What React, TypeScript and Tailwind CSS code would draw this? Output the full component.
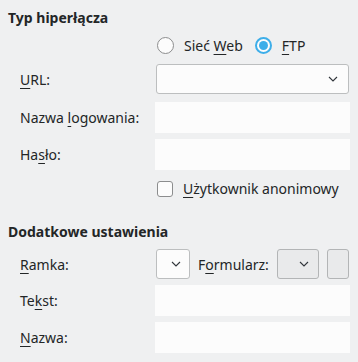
import React from 'react'

const Chevron = () => (
  <svg width="10" height="6" viewBox="0 0 10 6" className="text-[#31363b]">
    <path d="M1 1 L5 5 L9 1" fill="none" stroke="currentColor" strokeWidth="1.1" />
  </svg>
)

const Field = () => <div className="h-[31px] w-[195px] bg-[#fcfcfc]" />

function Row({ label, children }: { label: React.ReactNode; children: React.ReactNode }) {
  return (
    <div className="flex items-center">
      <div className="w-[155px] shrink-0 whitespace-nowrap pl-[20px]">{label}</div>
      {children}
    </div>
  )
}

const U = ({ children }: { children: React.ReactNode }) => (
  <span className="underline decoration-[1px] underline-offset-[3px]">{children}</span>
)

export default function App() {
  return (
    <div
      className="h-[362px] w-[358px] bg-[#eff0f1] text-[14px] leading-[19px] text-[#232627]"
      style={{ fontFamily: '"Noto Sans", sans-serif' }}
    >
      <div className="px-[8px] pt-[8px] font-bold">Typ hiperłącza</div>

      {/* radio buttons */}
      <div className="mt-[9px] flex items-center pl-[157px]">
        <span className="h-[17px] w-[17px] rounded-full border border-[#8c8d8e] bg-[#fcfcfc]" />
        <span className="ml-[10px]">
          Sieć <U>W</U>eb
        </span>
        <span className="ml-[12px] flex h-[17px] w-[17px] items-center justify-center rounded-full border-2 border-[#3daee9] bg-[#fcfcfc]">
          <span className="h-[9px] w-[9px] rounded-full bg-[#3daee9]" />
        </span>
        <span className="ml-[10px]">
          <U>F</U>TP
        </span>
      </div>

      <div className="mt-[9px] flex flex-col gap-[6px]">
        <Row label={<><U>U</U>RL:</>}>
          <div className="ml-[1px] flex h-[30px] w-[193px] items-center justify-end rounded-[3px] border border-[#bcbebf] bg-[#fcfcfc] pr-[10px]">
            <Chevron />
          </div>
        </Row>
        <div className="mt-[2px] flex flex-col gap-[6px]">
          <Row label={<>Nazwa <U>l</U>ogowania:</>}>
            <Field />
          </Row>
          <Row label={<>Ha<U>s</U>ło:</>}>
            <Field />
          </Row>
        </div>
      </div>

      <div className="mt-[9px] flex items-center pl-[157px]">
        <span className="h-[16px] w-[16px] rounded-[3px] border border-[#8c8d8e] bg-[#fcfcfc]" />
        <span className="ml-[10px]">
          <U>U</U>żytkownik anonimowy
        </span>
      </div>

      <div className="mt-[24px] px-[8px] font-bold">Dodatkowe ustawienia</div>

      <div className="mt-[8px] flex flex-col gap-[6px]">
        <Row label={<><U>R</U>amka:</>}>
          <div className="ml-[1px] flex items-center">
            <div className="flex h-[30px] w-[34px] items-center justify-end rounded-[3px] border border-[#bcbebf] bg-[#fcfcfc] pr-[8px]">
              <Chevron />
            </div>
            <span className="ml-[8px]">
              F<U>o</U>rmularz:
            </span>
            <div className="ml-[8px] flex h-[30px] w-[42px] items-center justify-end rounded-[3px] border border-[#b3b5b6] bg-[#e9eaeb] pr-[9px]">
              <Chevron />
            </div>
            <div className="ml-[8px] h-[30px] w-[22px] rounded-[3px] border border-[#b3b5b6] bg-[#e9eaeb]" />
          </div>
        </Row>
        <Row label={<>Te<U>k</U>st:</>}>
          <Field />
        </Row>
        <Row label={<><U>N</U>azwa:</>}>
          <Field />
        </Row>
      </div>
    </div>
  )
}
